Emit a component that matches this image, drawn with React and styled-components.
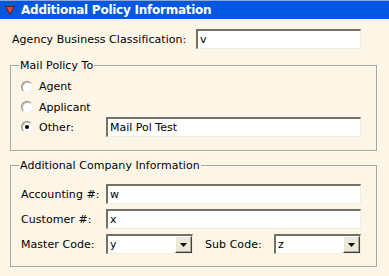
import React from "react";
import styled, { createGlobalStyle } from "styled-components";

const Global = createGlobalStyle`
  html, body {
    margin: 0;
    padding: 0;
    background: #fdf5e6;
  }
  body {
    font-family: "DejaVu Sans", Verdana, sans-serif;
    font-size: 11px;
    color: #000;
  }
`;

const Page = styled.div`
  width: 389px;
  height: 276px;
  background: #fdf5e6;
  overflow: hidden;
`;

const Header = styled.div`
  display: flex;
  align-items: center;
  height: 18px;
  border-top: 1px solid #8aa8e6;
  background: #0058e0;
  padding-left: 5px;
  gap: 6px;
`;

const Title = styled.span`
  color: #fff;
  font-weight: bold;
  font-size: 12px;
  letter-spacing: -0.25px;
`;

const Body = styled.div`
  padding: 10px 0 0 10px;
`;

const TopRow = styled.div`
  display: flex;
  align-items: center;
  height: 20px;
  padding-left: 2px;
`;

const Label = styled.span`
  width: ${(p) => p.w || 85}px;
  flex: none;
  letter-spacing: 0.05px;
  white-space: nowrap;
`;

const Input = styled.div`
  box-sizing: border-box;
  width: ${(p) => p.w}px;
  height: 20px;
  flex: none;
  background: #fff;
  border-style: solid;
  border-width: 2px 1px 1px 2px;
  border-color: #717168 #f1ede0 #f1ede0 #717168;
  display: flex;
  align-items: center;
  padding-left: 2px;
  font-size: 11px;
`;

const Group = styled.fieldset`
  box-sizing: border-box;
  width: 367px;
  margin: ${(p) => p.top}px 0 0 0;
  padding: ${(p) => p.pad};
  border: 1px solid #a7a697;
  box-shadow: inset 1px 1px 0 #fff, 1px 1px 0 #fff;
  display: flex;
  flex-direction: column;
  gap: ${(p) => p.gap || 0}px;
`;

const Legend = styled.legend`
  padding: 0 1px;
  margin-left: -2px;
  line-height: 13px;
  letter-spacing: 0.05px;
`;

const Row = styled.div`
  display: flex;
  align-items: center;
  height: ${(p) => p.h || 20}px;
`;

const Radio = styled.span`
  box-sizing: border-box;
  width: 12px;
  height: 12px;
  border-radius: 50%;
  flex: none;
  background: #fff;
  border: 1px solid;
  border-color: #8c8c84 #f4f2ea #f4f2ea #8c8c84;
  box-shadow: inset 1px 1px 0 #c8c6bc;
  display: flex;
  align-items: center;
  justify-content: center;
  margin-right: 6px;

  &::after {
    content: "";
    width: 4px;
    height: 4px;
    border-radius: 50%;
    background: ${(p) => (p.checked ? "#000" : "transparent")};
  }
`;

const Select = styled(Input)`
  padding-right: 0;
  justify-content: space-between;
`;

const ArrowBtn = styled.span`
  box-sizing: border-box;
  width: 17px;
  height: 17px;
  background: #ece9d8;
  border: 1px solid;
  border-color: #fff #404040 #404040 #fff;
  box-shadow: inset -1px -1px 0 #aca899;
  display: flex;
  align-items: center;
  justify-content: center;
`;

const Gap = styled.span`
  width: ${(p) => p.w}px;
  flex: none;
`;

function Arrow() {
  return (
    <ArrowBtn>
      <svg width="7" height="4" viewBox="0 0 7 4">
        <path d="M0 0h7L3.5 4z" fill="#000" />
      </svg>
    </ArrowBtn>
  );
}

export default function App() {
  return (
    <Page>
      <Global />
      <Header>
        <svg width="10" height="10" viewBox="0 0 10 10">
          <path d="M0.5 1.5h9L5 9.5z" fill="#d84848" stroke="#5a1a1a" strokeWidth="1" />
        </svg>
        <Title>Additional Policy Information</Title>
      </Header>
      <Body>
        <TopRow>
          <Label w={184}>Agency Business Classification:</Label>
          <Input w={165}>v</Input>
        </TopRow>

        <Group top={10} pad="4px 15px 13px 10px">
          <Legend>Mail Policy To</Legend>
          <Row h={21}>
            <Radio />
            Agent
          </Row>
          <Row>
            <Radio />
            Applicant
          </Row>
          <Row>
            <Radio checked />
            <Label w={67}>Other:</Label>
            <Input w={255}>Mail Pol Test</Input>
          </Row>
        </Group>

        <Group top={8} pad="12px 15px 12px 10px" gap={5}>
          <Legend>Additional Company Information</Legend>
          <Row>
            <Label>Accounting #:</Label>
            <Input w={255}>w</Input>
          </Row>
          <Row>
            <Label>Customer #:</Label>
            <Input w={255}>x</Input>
          </Row>
          <Row>
            <Label>Master Code:</Label>
            <Select w={87}>
              y
              <Arrow />
            </Select>
            <Gap w={12} />
            <Label w={69}>Sub Code:</Label>
            <Select w={87}>
              z
              <Arrow />
            </Select>
          </Row>
        </Group>
      </Body>
    </Page>
  );
}
